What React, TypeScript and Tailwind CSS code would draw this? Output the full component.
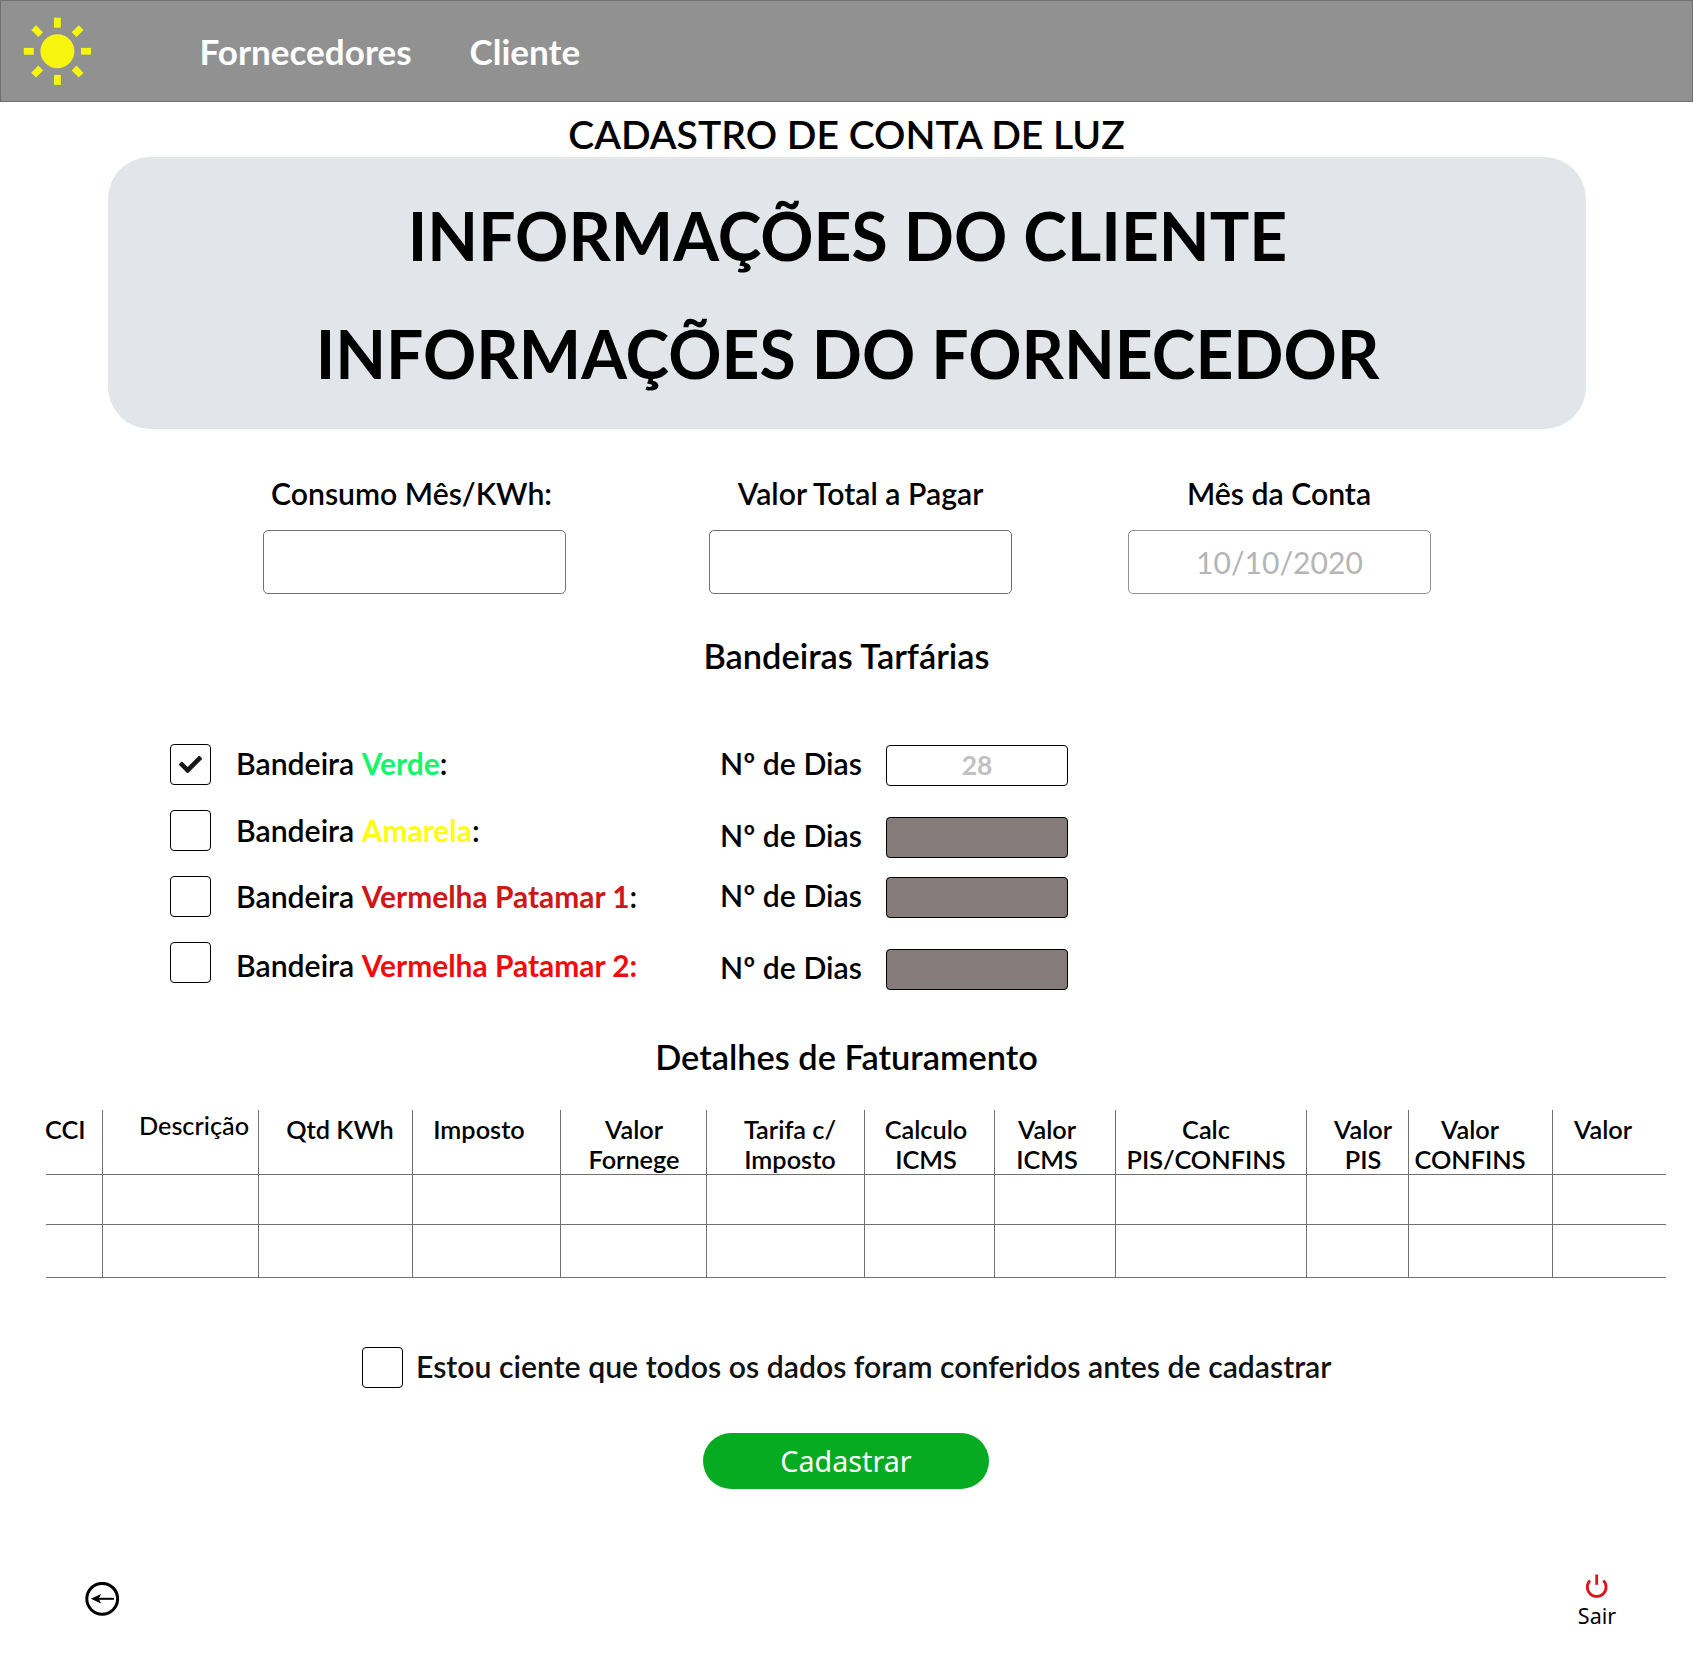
import { FaCheck } from 'react-icons/fa';

function SunIcon() {
  return (
    <svg width="68" height="68" viewBox="-34.4 -34.3 68 68" fill="#f5f50f" aria-hidden="true">
      <circle r="17" />
      {[0, 45, 90, 135, 180, 225, 270, 315].map((angle) => (
        <rect key={angle} x="-3.4" y="-33.6" width="6.8" height="10" transform={`rotate(${angle})`} />
      ))}
    </svg>
  );
}

function BackIcon() {
  return (
    <svg width="34" height="34" viewBox="0 0 34 34" fill="none" aria-hidden="true">
      <circle cx="17.2" cy="16.8" r="15.4" stroke="#000" strokeWidth="3" />
      <path d="M11 16.8H29" stroke="#000" strokeWidth="2" />
      <path d="M5.9 16.8L16 12.1L13.8 16.8L16 21.5Z" fill="#000" />
    </svg>
  );
}

function PowerIcon() {
  return (
    <svg width="24" height="27" viewBox="0 0 24 27" fill="none" stroke="#dd1518" strokeWidth="2.8" aria-hidden="true">
      <path d="M5 6.4A9.4 9.4 0 1 0 18.4 6.4" />
      <path d="M11.7 0.5V10.8" />
    </svg>
  );
}

function Checkbox({ checked = false }: { checked?: boolean }) {
  return (
    <span
      role="checkbox"
      aria-checked={checked}
      className="flex size-[41px] shrink-0 items-center justify-center rounded border border-black bg-white"
    >
      {checked && <FaCheck size={23} color="#161616" />}
    </span>
  );
}

const fields = [
  { label: 'Consumo Mês/KWh:', value: '', box: 'border-[#707070]', text: 'pr-1.5' },
  { label: 'Valor Total a Pagar', value: '', box: 'border-[#707070]', text: '' },
  { label: 'Mês da Conta', value: '10/10/2020', box: 'border-[#929292]', text: 'pr-px' },
];

const flags = [
  { name: 'Verde', color: 'font-bold text-[#14f56c]', tail: ':', checked: true, offset: 'mt-px' },
  { name: 'Amarela', color: 'font-bold text-[#fbff0f]', tail: ':', checked: false, offset: 'mt-0.5' },
  { name: 'Vermelha Patamar 1', color: 'font-bold text-[#cf1618]', tail: ':', checked: false, offset: 'mt-0.5' },
  { name: 'Vermelha Patamar 2:', color: 'font-bold text-[#f00c0c]', tail: '', checked: false, offset: 'mt-[5px]' },
];

const days = [
  { value: '28', box: 'bg-white', gap: '' },
  { value: '', box: 'bg-[#857b7a]', gap: 'mt-[31px]' },
  { value: '', box: 'bg-[#857b7a]', gap: 'mt-[19px]' },
  { value: '', box: 'bg-[#857b7a]', gap: 'mt-[31px]' },
];

const columns = [
  { lines: ['CCI'], style: '' },
  { lines: ['Descrição'], style: 'pl-[27px] -mt-1 font-medium' },
  { lines: ['Qtd KWh'], style: 'pl-[9px]' },
  { lines: ['Imposto'], style: 'pr-[15px]' },
  { lines: ['Valor', 'Fornege'], style: 'pl-px' },
  { lines: ['Tarifa c/', 'Imposto'], style: 'pl-[9px]' },
  { lines: ['Calculo', 'ICMS'], style: 'pr-[7px]' },
  { lines: ['Valor', 'ICMS'], style: 'pr-4' },
  { lines: ['Calc', 'PIS/CONFINS'], style: 'pr-2.5' },
  { lines: ['Valor', 'PIS'], style: 'pl-[11px]' },
  { lines: ['Valor', 'CONFINS'], style: 'pr-[21px]' },
  { lines: ['Valor'], style: 'pr-[13px]' },
];

const tableGrid =
  'grid grid-cols-[57px_156px_154px_148px_146px_158px_130px_121px_191px_102px_144px_113px] border-b border-[#707070]';

function BlankRow({ height }: { height: string }) {
  return (
    <div className={`${tableGrid} ${height}`}>
      {columns.map((_, i) => (
        <div key={i} className="border-r border-[#707070] last:border-r-0" />
      ))}
    </div>
  );
}

export default function App() {
  return (
    <div className="h-[1662px] w-[1693px] overflow-hidden bg-white font-['Lato',sans-serif] font-semibold text-black">
      <header className="flex h-[102px] items-center border border-[#707070] bg-[#919191] pl-[22px]">
        <SunIcon />
        <nav className="ml-[108.5px] flex text-[35.1px] leading-[100px] font-bold text-white">
          <a className="w-[270px]">Fornecedores</a>
          <a>Cliente</a>
        </nav>
      </header>

      <main>
        <h1 className="mt-2 text-center text-[39.05px] leading-[47px]">CADASTRO DE CONTA DE LUZ</h1>

        <section className="ml-[108px] h-[272px] w-[1478px] rounded-[42px] bg-[#e2e5ea] pt-5 pl-px text-center text-[66px] leading-[118px] font-bold">
          <h2>INFORMAÇÕES DO CLIENTE</h2>
          <h2>INFORMAÇÕES DO FORNECEDOR</h2>
        </section>

        <section className="mt-[46px] ml-[263px] grid grid-cols-[446px_419px_303px]">
          {fields.map((f) => (
            <div key={f.label} className="w-[303px] text-center">
              <div className={`text-[30.2px] leading-9 ${f.text}`}>{f.label}</div>
              <div
                className={`mt-[19px] h-16 rounded-[5px] border text-[30.1px] leading-[62px] font-normal text-[#b5b5b5] ${f.box}`}
              >
                {f.value}
              </div>
            </div>
          ))}
        </section>

        <h3 className="mt-[42px] text-center text-[34.35px] leading-10">Bandeiras Tarfárias</h3>

        <section className="mt-[68px] ml-[170px] flex h-[246px] text-[30.2px] leading-9">
          <div className="flex w-[550px] flex-col gap-[25px]">
            {flags.map((f) => (
              <div key={f.name} className="flex h-[41px] items-start gap-[25px]">
                <Checkbox checked={f.checked} />
                <span className={f.offset}>
                  Bandeira <span className={`text-[29.9px] ${f.color}`}>{f.name}</span>
                  {f.tail}
                </span>
              </div>
            ))}
          </div>
          <div className="pt-px">
            {days.map((d, i) => (
              <div key={i} className={`flex items-start ${d.gap}`}>
                <span className="w-[166px]">Nº de Dias</span>
                <span
                  className={`h-[41px] w-[182px] rounded border border-black text-center text-[26.4px] leading-[39px] font-bold text-[#c1c1c1] ${d.box}`}
                >
                  {d.value}
                </span>
              </div>
            ))}
          </div>
        </section>

        <h3 className="mt-[47px] text-center text-[34.35px] leading-10">Detalhes de Faturamento</h3>

        <section className="mt-[33px] ml-[46px] w-[1620px]">
          <div className={`${tableGrid} h-[65px] text-[25.3px] leading-[30px]`}>
            {columns.map((c, i) => (
              <div
                key={i}
                className={`border-r border-[#707070] pt-1 whitespace-nowrap last:border-r-0 ${i === 0 ? '-ml-px text-left' : 'text-center'}`}
              >
                <div className={c.style}>
                  {c.lines.map((line) => (
                    <div key={line}>{line}</div>
                  ))}
                </div>
              </div>
            ))}
          </div>
          <BlankRow height="h-[50px]" />
          <BlankRow height="h-[53px]" />
        </section>

        <label className="mt-[69px] ml-[362px] flex h-[41px] gap-[13px] text-[30.2px] leading-[38px] text-[#111111]">
          <Checkbox />
          <span>Estou ciente que todos os dados foram conferidos antes de cadastrar</span>
        </label>

        <button className="mt-[45px] ml-[703px] block h-14 w-[286px] rounded-full bg-[#07ab22] font-['Noto_Sans',sans-serif] text-[28.7px] leading-[56px] font-normal text-white">
          Cadastrar
        </button>
      </main>

      <footer className="mt-[85px] flex justify-between pr-[76px] pl-[85px]">
        <a className="mt-2">
          <BackIcon />
        </a>
        <a className="flex w-10 flex-col items-center font-['Noto_Sans',sans-serif] text-[21.5px] leading-[26px] font-normal">
          <PowerIcon />
          <span className="mt-0.5">Sair</span>
        </a>
      </footer>
    </div>
  );
}
